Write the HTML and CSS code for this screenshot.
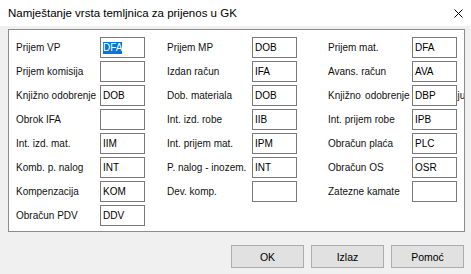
FILE: index.html
```html
<!DOCTYPE html>
<html>
<head>
<meta charset="utf-8">
<link rel="stylesheet" href="styles.css">
<title>Namještanje vrsta temljnica za prijenos u GK</title>
</head>
<body>
<div class="dialog">
  <div class="titlebar">
    <span class="title">Namještanje vrsta temljnica za prijenos u GK</span>
    <svg class="close" width="9" height="9" viewBox="0 0 9 9"><path d="M0.5 0.5 L8.5 8.5 M8.5 0.5 L0.5 8.5" stroke="#000" stroke-width="1" fill="none"/></svg>
  </div>
  <div class="content">
    <div class="panel">
      <div class="fields">
        <span class="lbl">Prijem VP</span><span class="box"><span class="sel">DFA</span></span>
        <span class="lbl c2">Prijem MP</span><span class="box">DOB</span>
        <span class="lbl c3">Prijem mat.</span><span class="box">DFA</span>

        <span class="lbl">Prijem komisija</span><span class="box"></span>
        <span class="lbl c2">Izdan račun</span><span class="box">IFA</span>
        <span class="lbl c3">Avans. račun</span><span class="box">AVA</span>

        <span class="lbl">Knjižno odobrenje</span><span class="box">DOB</span>
        <span class="lbl c2">Dob. materiala</span><span class="box">DOB</span>
        <span class="lbl c3 long">Knjižno odobrenje po komisiju</span><span class="box">DBP</span>

        <span class="lbl">Obrok IFA</span><span class="box"></span>
        <span class="lbl c2">Int. izd. robe</span><span class="box">IIB</span>
        <span class="lbl c3">Int. prijem robe</span><span class="box">IPB</span>

        <span class="lbl">Int. izd. mat.</span><span class="box">IIM</span>
        <span class="lbl c2">Int. prijem mat.</span><span class="box">IPM</span>
        <span class="lbl c3">Obračun plaća</span><span class="box">PLC</span>

        <span class="lbl">Komb. p. nalog</span><span class="box">INT</span>
        <span class="lbl c2">P. nalog - inozem.</span><span class="box">INT</span>
        <span class="lbl c3">Obračun OS</span><span class="box">OSR</span>

        <span class="lbl">Kompenzacija</span><span class="box">KOM</span>
        <span class="lbl c2">Dev. komp.</span><span class="box"></span>
        <span class="lbl c3">Zatezne kamate</span><span class="box"></span>

        <span class="lbl">Obračun PDV</span><span class="box">DDV</span>
      </div>
    </div>
    <div class="buttons">
      <button class="btn">OK</button>
      <button class="btn">Izlaz</button>
      <button class="btn">Pomoć</button>
    </div>
  </div>
</div>
</body>
</html>
```

FILE: styles.css
```css
html, body { margin: 0; padding: 0; }

body {
  background: #f0f0f0;
  color: #000;
  font-family: "Liberation Sans", Arial, sans-serif;
  font-size: 10px;
}

.titlebar {
  height: 26px;
  background: #fff;
  display: flex;
  align-items: center;
  justify-content: space-between;
  padding: 0 8px 0 8px;
}
.title { font-size: 11.5px; }
.close { display: block; }

.content { padding: 3px 7px 0 8px; }

.panel {
  box-sizing: border-box;
  width: 457px;
  height: 203px;
  background: #fff;
  border: 1px solid #8c8c8c;
  padding: 7px 0 0 7px;
  overflow: hidden;
}

.fields {
  display: grid;
  grid-template-columns: 84px 45px 107px 45px 115px 45px;
  grid-auto-rows: 21px;
  row-gap: 3px;
}

.lbl {
  display: flex;
  align-items: center;
  white-space: pre;
  color: #111;
}
.lbl.c2 { padding-left: 22px; }
.lbl.c3 { padding-left: 31px; }
/* label runs on under the box, only its tail shows */
.lbl.long { word-spacing: 1.5px; }

.box {
  box-sizing: border-box;
  display: flex;
  align-items: center;
  background: #fff;
  border: 1px solid #7a7a7a;
  padding-left: 2px;
  line-height: 12px;
}
.sel { background: #0078d7; color: #fff; }

.buttons {
  display: flex;
  justify-content: flex-end;
  gap: 7px;
  margin-top: 13px;
}
.btn {
  box-sizing: border-box;
  width: 73px;
  height: 23px;
  background: #e1e1e1;
  border: 1px solid #adadad;
  font-family: "Liberation Sans", Arial, sans-serif;
  font-size: 10.5px;
  color: #000;
  padding: 0;
}
```
